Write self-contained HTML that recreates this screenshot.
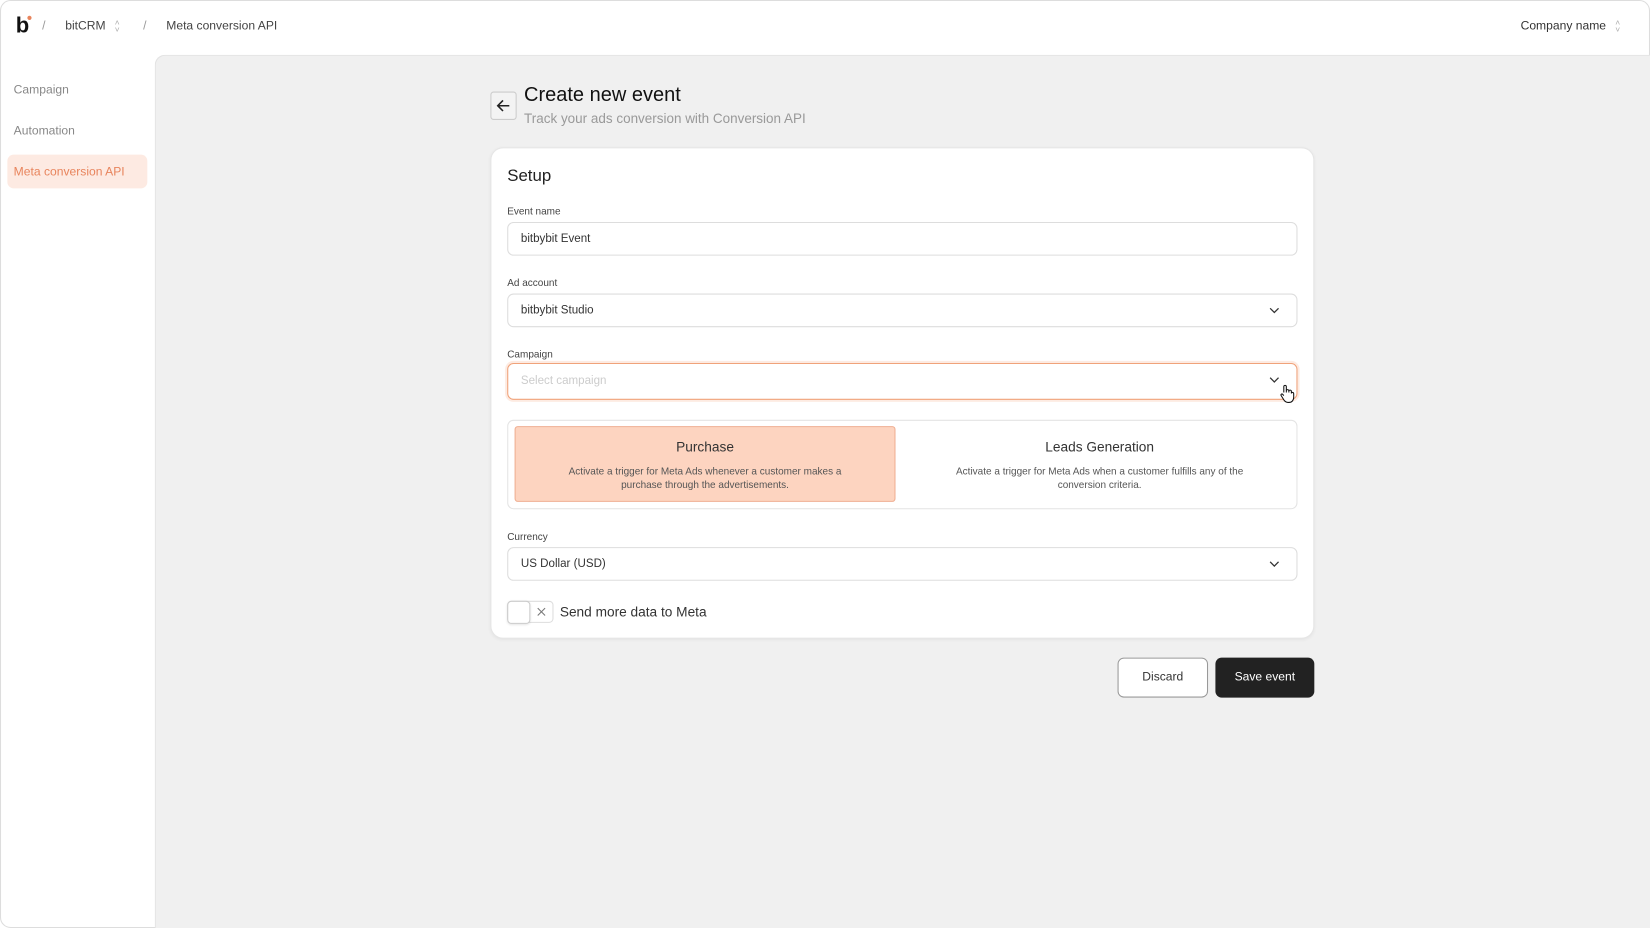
<!DOCTYPE html>
<html><head><meta charset="utf-8"><style>
*{box-sizing:border-box;margin:0;padding:0}
html,body{width:1650px;height:928px;overflow:hidden;background:#fff;font-family:"Liberation Sans",sans-serif;}
#w{position:absolute;left:0;top:0;width:1568px;height:882px;transform:scale(1.05230,1.05215);transform-origin:0 0;}
.a{position:absolute;white-space:nowrap}
.frame{position:absolute;left:0;top:0;width:1568px;height:882px;border:1px solid #ddd;border-radius:10px;}
.main{position:absolute;left:147px;top:52px;width:1421px;height:830px;background:#f0f0f0;border-top:1px solid #e2e2e2;border-left:1px solid #e2e2e2;border-top-left-radius:10px;}
.inp{position:absolute;left:482px;width:751px;height:32px;border:1px solid #ddd;border-radius:6px;background:#fff;font-size:11px;color:#333;padding-left:12px;line-height:30px}
.lbl{position:absolute;left:482px;font-size:9.5px;color:#444}
.chev{position:absolute;right:16px;top:11px}
</style></head><body><div id="w">
<div class="frame"></div>
<div class="a" style="left:15px;top:13px;font-size:21px;font-weight:bold;color:#111">b</div>
<div class="a" style="left:26px;top:15px;width:4px;height:4px;border-radius:2px;background:#e8845c"></div>
<div class="a" style="left:40px;top:19px;font-size:11.5px;color:#999">/</div>
<div class="a" style="left:62px;top:19px;font-size:11.5px;color:#444">bitCRM</div>
<div class="a" style="left:109px;top:18px;font-size:8px;color:#aaa;line-height:7px">˄<br>˅</div>
<div class="a" style="left:136px;top:19px;font-size:11.5px;color:#999">/</div>
<div class="a" style="left:158px;top:19px;font-size:11.5px;color:#444">Meta conversion API</div>
<div class="a" style="left:1445px;top:19px;font-size:11.5px;color:#333">Company name</div>
<div class="a" style="left:1535px;top:18px;font-size:8px;color:#aaa;line-height:7px">˄<br>˅</div>
<div class="a" style="left:13px;top:80px;font-size:11.5px;color:#888">Campaign</div>
<div class="a" style="left:13px;top:119px;font-size:11.5px;color:#888">Automation</div>
<div class="a" style="left:7px;top:147px;width:133px;height:32px;border-radius:6px;background:#fdeae2"></div>
<div class="a" style="left:13px;top:158px;font-size:11.5px;color:#e8845c">Meta conversion API</div>
<div class="main"></div>
<div class="a" style="left:466px;top:87px;width:25px;height:27px;border:1px solid #ccc;border-radius:3px;background:#f3f3f3"><svg width="23" height="25" viewBox="0 0 23 25"><path d="M17 12.5H6M11 7.5l-5 5 5 5" stroke="#222" stroke-width="1.5" fill="none"/></svg></div>
<div class="a" style="left:498px;top:80px;font-size:19px;color:#111">Create new event</div>
<div class="a" style="left:498px;top:105px;font-size:12.8px;color:#999">Track your ads conversion with Conversion API</div>
<div class="a" style="left:466px;top:140px;width:783px;height:467px;background:#fff;border-radius:12px;border:1px solid #e6e6e6;box-shadow:0 1px 3px rgba(0,0,0,.05)"></div>
<div class="a" style="left:482px;top:159px;font-size:16px;color:#222">Setup</div>
<div class="lbl" style="top:196px">Event name</div>
<div class="inp" style="top:211px">bitbybit Event</div>
<div class="lbl" style="top:264px">Ad account</div>
<div class="inp" style="top:279px">bitbybit Studio<svg class="chev" width="10" height="8"><path d="M1 2l4 4 4-4" stroke="#333" fill="none" stroke-width="1.2"/></svg></div>
<div class="lbl" style="top:332px">Campaign</div>
<div class="inp" style="top:345px;height:35px;border:1.5px solid #f0a27a;box-shadow:0 0 0 2px #fdebe2;color:#ccc;line-height:32px">Select campaign<svg class="chev" width="10" height="8"><path d="M1 2l4 4 4-4" stroke="#333" fill="none" stroke-width="1.2"/></svg></div>
<svg class="a" style="left:1215px;top:364px" width="16" height="20"><path d="M5 9V3.5a1.2 1.2 0 012.4 0V9m0-1.5a1.2 1.2 0 012.4 0V9m0-1a1.2 1.2 0 012.4 0V10m0-.5a1.2 1.2 0 012.2.5v3.5c0 3-1.8 5-4.5 5H9c-2 0-3-1-4-2.5L2.5 12c-.7-1 .5-2 1.4-1.3L5 12" fill="#fff" stroke="#111" stroke-width="1"/></svg>
<div class="a" style="left:482px;top:399px;width:751px;height:85px;border:1px solid #e4e4e4;border-radius:6px"></div>
<div class="a" style="left:489px;top:405px;width:362px;height:72px;border:1px solid #efaf92;border-radius:3px;background:#fdd4c0"></div>
<div class="a" style="left:489px;top:417px;width:362px;text-align:center;font-size:13px;color:#333">Purchase</div>
<div class="a" style="left:489px;top:442px;width:362px;text-align:center;font-size:9.5px;color:#555;line-height:13px;white-space:normal;padding:0 40px">Activate a trigger for Meta Ads whenever a customer makes a purchase through the advertisements.</div>
<div class="a" style="left:860px;top:417px;width:370px;text-align:center;font-size:13px;color:#333">Leads Generation</div>
<div class="a" style="left:860px;top:442px;width:370px;text-align:center;font-size:9.5px;color:#555;line-height:13px;white-space:normal;padding:0 40px">Activate a trigger for Meta Ads when a customer fulfills any of the conversion criteria.</div>
<div class="lbl" style="top:505px">Currency</div>
<div class="inp" style="top:520px">US Dollar (USD)<svg class="chev" width="10" height="8"><path d="M1 2l4 4 4-4" stroke="#333" fill="none" stroke-width="1.2"/></svg></div>
<div class="a" style="left:482px;top:571px;width:44px;height:21px;border:1px solid #ddd;border-radius:4px;background:#fff"></div>
<div class="a" style="left:482px;top:571px;width:22px;height:22px;border:1px solid #ccc;border-radius:4px;background:#fff;box-shadow:0 1px 2px rgba(0,0,0,.1)"></div>
<svg class="a" style="left:510px;top:577px" width="9" height="9"><path d="M1 1l7 7M8 1l-7 7" stroke="#777" stroke-width="1"/></svg>
<div class="a" style="left:532px;top:574px;font-size:13px;color:#333">Send more data to Meta</div>
<div class="a" style="left:1062px;top:625px;width:86px;height:38px;border:1px solid #999;border-radius:6px;background:#fff;text-align:center;line-height:36px;font-size:11.5px;color:#333">Discard</div>
<div class="a" style="left:1155px;top:625px;width:94px;height:38px;border-radius:6px;background:#222;text-align:center;line-height:38px;font-size:11.5px;color:#fff">Save event</div>
</div></body></html>
